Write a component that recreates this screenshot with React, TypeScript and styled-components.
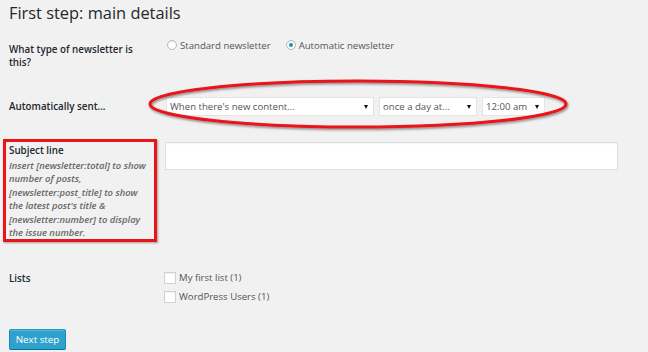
import React from "react";
import styled, { createGlobalStyle } from "styled-components";

const Global = createGlobalStyle`
  html, body { margin: 0; padding: 0; background: #f1f1f1; }
  body { font-family: "Open Sans", "Noto Sans", sans-serif; color: #23282d; }
  * { box-sizing: border-box; }
`;

const Page = styled.div`
  width: 648px;
  height: 352px;
  padding: 0 0 0 3px;
  overflow: hidden;
  position: relative;
`;

const Title = styled.h1`
  margin: 0;
  padding: 1px 0 0 6px;
  height: 23px;
  font-size: 16.4px;
  line-height: 23px;
  font-weight: 400;
  color: #23282d;
`;

const Row = styled.div<{ $top: number }>`
  display: grid;
  grid-template-columns: 162px 1fr;
  align-items: start;
  margin-top: ${(p) => p.$top}px;
`;

const Label = styled.div<{ $pad?: number; $boxed?: boolean }>`
  font-size: 9.8px;
  line-height: 13px;
  font-weight: 600;
  color: #23282d;
  padding: ${(p) => (p.$boxed ? "2px 3px 0 3px" : `${p.$pad ?? 3}px 0 0 6px`)};
  ${(p) =>
    p.$boxed &&
    `
    width: 154px;
    height: 103px;
    border: 3px solid #e8141a;
    box-shadow: 1px 1px 2px rgba(0,0,0,0.35);
  `}
`;

const Description = styled.div`
  margin-top: 1.5px;
  font-size: 9.4px;
  line-height: 13.5px;
  font-style: italic;
  font-weight: 600;
  color: #666;
`;

const Field = styled.div`
  position: relative;
  display: flex;
  align-items: center;
`;

const RadioGroup = styled.div`
  display: flex;
  align-items: center;
  gap: 13px;
  height: 10px;
`;

const RadioItem = styled.label`
  display: flex;
  align-items: center;
  gap: 3px;
  font-size: 9.6px;
  line-height: 13px;
  color: #555;
`;

const RadioCircle = styled.span<{ $checked?: boolean }>`
  width: 10px;
  height: 10px;
  border-radius: 50%;
  border: 1px solid #b4b9be;
  background: #fff;
  box-shadow: inset 0 1px 2px rgba(0, 0, 0, 0.07);
  display: inline-flex;
  align-items: center;
  justify-content: center;
  margin-left: 2px;
  &::after {
    content: "";
    display: ${(p) => (p.$checked ? "block" : "none")};
    width: 4px;
    height: 4px;
    border-radius: 50%;
    background: #1e8cbe;
  }
`;

const Selects = styled.div`
  display: flex;
  gap: 5px;
  margin-left: 1px;
`;

const Select = styled.div<{ $w: number }>`
  width: ${(p) => p.$w}px;
  height: 19px;
  background: #fff;
  border: 1px solid #e4e4e4;
  display: flex;
  align-items: center;
  justify-content: space-between;
  padding: 0 5px 0 3px;
  font-size: 9.6px;
  color: #555;
  white-space: nowrap;
`;

const Arrow = styled.span`
  width: 0;
  height: 0;
  border-left: 2.5px solid transparent;
  border-right: 2.5px solid transparent;
  border-top: 4px solid #111;
`;

const Ellipse = styled.svg`
  position: absolute;
  left: -16px;
  top: -17px;
  overflow: visible;
  pointer-events: none;
`;

const TextInput = styled.div`
  width: 453px;
  height: 28px;
  background: #fff;
  border: 1px solid #ddd;
  box-shadow: inset 0 1px 2px rgba(0, 0, 0, 0.04);
  margin-top: 3px;
`;

const CheckList = styled.div`
  display: flex;
  flex-direction: column;
  gap: 7px;
  margin-top: 2px;
`;

const CheckItem = styled.label`
  display: flex;
  align-items: center;
  gap: 3px;
  font-size: 9.6px;
  line-height: 12px;
  color: #555;
`;

const Box = styled.span`
  width: 12px;
  height: 12px;
  margin-left: -1px;
  border: 1px solid #cfd2d5;
  background: #fff;
  box-shadow: inset 0 1px 2px rgba(0, 0, 0, 0.06);
`;

const Button = styled.button`
  margin: 26px 0 0 6px;
  width: 57px;
  height: 21px;
  padding: 0;
  background: #2ea2cc;
  border: 1px solid #0074a2;
  border-color: #2a95c5 #1d86b5 #0074a2;
  border-radius: 2px;
  box-shadow: inset 0 1px 0 rgba(120, 200, 230, 0.5);
  color: #fff;
  font-family: "Open Sans", "Noto Sans", sans-serif;
  font-size: 9.8px;
  line-height: 19px;
  font-weight: 400;
`;

export default function App() {
  return (
    <>
      <Global />
      <Page>
        <Title>First step: main details</Title>

        <Row $top={17}>
          <Label>
            What type of newsletter is
            <br />
            this?
          </Label>
          <Field>
            <RadioGroup>
              <RadioItem>
                <RadioCircle />
                Standard newsletter
              </RadioItem>
              <RadioItem>
                <RadioCircle $checked />
                Automatic newsletter
              </RadioItem>
            </RadioGroup>
          </Field>
        </Row>

        <Row $top={28}>
          <Label>Automatically sent...</Label>
          <Field>
            <Selects>
              <Select $w={208}>
                When there's new content...
                <Arrow />
              </Select>
              <Select $w={98}>
                once a day at...
                <Arrow />
              </Select>
              <Select $w={63}>
                12:00 am
                <Arrow />
              </Select>
            </Selects>
            <Ellipse width="420" height="50" viewBox="0 0 420 50">
              <defs>
                <filter id="sh" x="-5%" y="-30%" width="110%" height="160%">
                  <feDropShadow dx="1" dy="1.5" stdDeviation="1" floodColor="#000" floodOpacity="0.45" />
                </filter>
              </defs>
              <ellipse
                cx="209"
                cy="24"
                rx="208"
                ry="23"
                fill="none"
                stroke="#e8141a"
                strokeWidth="3"
                filter="url(#sh)"
              />
            </Ellipse>
          </Field>
        </Row>

        <Row $top={23}>
          <Label $boxed>
            Subject line
            <Description>
              Insert [newsletter:total] to show number of posts, [newsletter:post_title] to show
              the latest post's title &amp; [newsletter:number] to display the issue number.
            </Description>
          </Label>
          <Field>
            <TextInput />
          </Field>
        </Row>

        <Row $top={28}>
          <Label $pad={2}>Lists</Label>
          <Field>
            <CheckList>
              <CheckItem>
                <Box />
                My first list (1)
              </CheckItem>
              <CheckItem>
                <Box />
                WordPress Users (1)
              </CheckItem>
            </CheckList>
          </Field>
        </Row>

        <Button>Next step</Button>
      </Page>
    </>
  );
}
